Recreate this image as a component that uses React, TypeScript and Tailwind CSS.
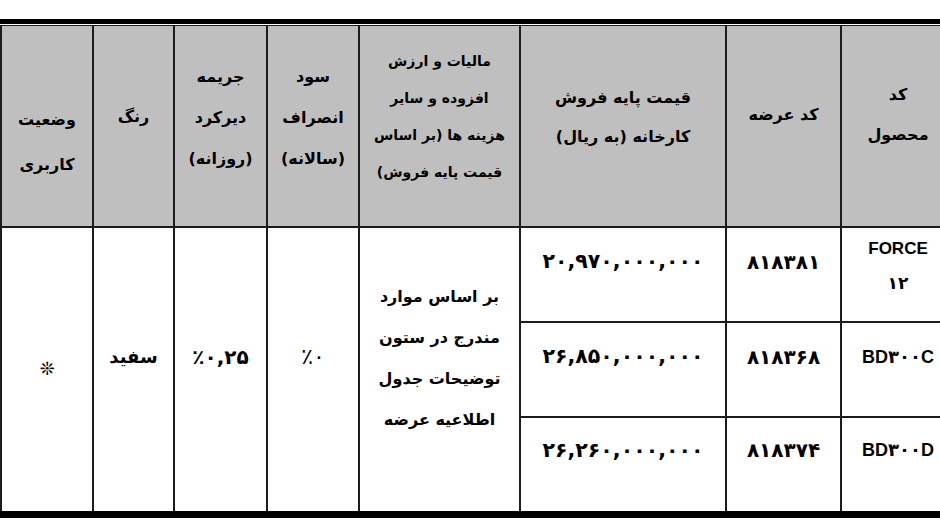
import React from "react";

const fa = { fontFamily: '"DejaVu Sans", sans-serif' };
const lat = { fontFamily: '"Liberation Sans", Arial, sans-serif' };

export default function App() {
  const head = "bg-[#bfbfbf] flex flex-col items-center justify-center text-center font-bold text-black";
  const body = "bg-white flex flex-col items-center justify-center text-center font-bold text-black";
  return (
    <div className="w-[940px] h-[525px] bg-white overflow-hidden">
      <div className="h-[19px]" />
      <div className="h-[5px] w-[954px] bg-black" />
      <div className="h-[1px]" />
      <div
        className="grid w-[954px] bg-[#1c1c1c] pt-[1px] pl-[2px] gap-[2px] grid-cols-[90px_79px_91px_90px_159px_204px_113px_112px] grid-rows-[200px_93px_93px_93px]"
        style={fa}
      >
        {/* header */}
        <div dir="rtl" className={`${head} text-[16px] leading-[45px] pt-[32px]`}>
          <span>وضعیت</span>
          <span>کاربری</span>
        </div>
        <div dir="rtl" className={`${head} text-[16px] pb-[18px]`}>
          <span>رنگ</span>
        </div>
        <div dir="rtl" className={`${head} text-[16px] leading-[41px] pb-[18px]`}>
          <span>جریمه</span>
          <span>دیرکرد</span>
          <span>(روزانه)</span>
        </div>
        <div dir="rtl" className={`${head} text-[16px] leading-[41px] pb-[18px]`}>
          <span>سود</span>
          <span>انصراف</span>
          <span>(سالانه)</span>
        </div>
        <div dir="rtl" className={`${head} text-[14px] leading-[37px] pb-[18px]`}>
          <span>مالیات و ارزش</span>
          <span>افزوده و سایر</span>
          <span>هزینه ها (بر اساس</span>
          <span>قیمت پایه فروش)</span>
        </div>
        <div dir="rtl" className={`${head} text-[16px] leading-[39px] pb-[18px]`}>
          <span>قیمت پایه فروش</span>
          <span>کارخانه (به ریال)</span>
        </div>
        <div dir="rtl" className={`${head} text-[16px] pb-[22px]`}>
          <span>کد عرضه</span>
        </div>
        <div dir="rtl" className={`${head} text-[16px] leading-[40px] pb-[22px]`}>
          <span>کد</span>
          <span>محصول</span>
        </div>

        {/* body merged cells */}
        <div className={`${body} row-span-3 pb-[2px] text-[18px] text-[#333]`}>
          <span>❊</span>
        </div>
        <div dir="rtl" className={`${body} row-span-3 pb-[26px] text-[18px]`}>
          <span>سفید</span>
        </div>
        <div className={`${body} row-span-3 pb-[26px] text-[20px]`}>
          <span dir="ltr">٪۰,۲۵</span>
        </div>
        <div className={`${body} row-span-3 pb-[26px] text-[22px] font-normal`}>
          <span dir="ltr">٪۰</span>
        </div>
        <div dir="rtl" className={`${body} row-span-3 pb-[23px] text-[16px] leading-[41px]`}>
          <span>بر اساس موارد</span>
          <span>مندرج در ستون</span>
          <span>توضیحات جدول</span>
          <span>اطلاعیه عرضه</span>
        </div>

        {/* row 1 */}
        <div className={`${body} pb-[26px] text-[20.5px]`}>
          <span dir="ltr">۲۰,۹۷۰,۰۰۰,۰۰۰</span>
        </div>
        <div className={`${body} pb-[26px] text-[20px]`}>
          <span dir="ltr">۸۱۸۳۸۱</span>
        </div>
        <div className={`${body} pb-[18px] text-[17px] leading-[35px]`}>
          <span style={lat}>FORCE</span>
          <span>۱۲</span>
        </div>

        {/* row 2 */}
        <div className={`${body} pb-[26px] text-[20.5px]`}>
          <span dir="ltr">۲۶,۸۵۰,۰۰۰,۰۰۰</span>
        </div>
        <div className={`${body} pb-[26px] text-[20px]`}>
          <span dir="ltr">۸۱۸۳۶۸</span>
        </div>
        <div className={`${body} pb-[26px] text-[18px]`}>
          <span dir="ltr">
            <span style={lat}>BD</span>۳۰۰<span style={lat}>C</span>
          </span>
        </div>

        {/* row 3 */}
        <div className={`${body} pb-[29px] text-[20.5px]`}>
          <span dir="ltr">۲۶,۲۶۰,۰۰۰,۰۰۰</span>
        </div>
        <div className={`${body} pb-[29px] text-[20px]`}>
          <span dir="ltr">۸۱۸۳۷۴</span>
        </div>
        <div className={`${body} pb-[29px] text-[18px]`}>
          <span dir="ltr">
            <span style={lat}>BD</span>۳۰۰<span style={lat}>D</span>
          </span>
        </div>
      </div>
      <div className="h-[7px] w-[954px] bg-black" />
    </div>
  );
}
